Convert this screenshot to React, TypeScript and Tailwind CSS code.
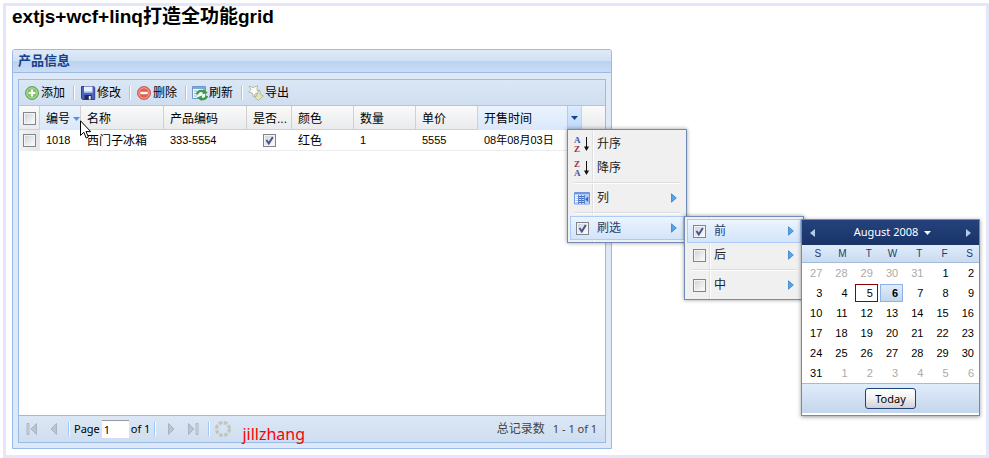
import { useState } from 'react'
import type { ReactNode } from 'react'

const products = [
  { id: '1018', name: '西门子冰箱', code: '333-5554', active: true, color: '红色', count: '1', price: '5555', date: '08年08月03日' },
]

const weekdays = ['S', 'M', 'T', 'W', 'T', 'F', 'S']

const weeks = [
  [27, 28, 29, 30, 31, 1, 2],
  [3, 4, 5, 6, 7, 8, 9],
  [10, 11, 12, 13, 14, 15, 16],
  [17, 18, 19, 20, 21, 22, 23],
  [24, 25, 26, 27, 28, 29, 30],
  [31, 1, 2, 3, 4, 5, 6],
]

/* Icons */

function AddIcon() {
  return (
    <svg width="16" height="16" viewBox="0 0 16 16">
      <circle cx="8" cy="8" r="6.5" fill="#6db85a" stroke="#6aa35c" />
      <circle cx="8" cy="8" r="5.2" fill="#7cc264" stroke="#c5e6b6" strokeWidth="0.8" />
      <path d="M8 4.6v6.8M4.6 8h6.8" stroke="#fff" strokeWidth="2.2" />
    </svg>
  )
}

function SaveIcon() {
  return (
    <svg width="16" height="16" viewBox="0 0 16 16">
      <path d="M1.5 1.5h12.2l1 1v12H2.5l-1-1z" fill="#4a63c0" stroke="#2f3f94" />
      <path d="M4 1.5h8.5v6H4z" fill="#e9effb" />
      <path d="M4 6.5h8.5v1.2H4z" fill="#9db4e6" />
      <path d="M4.5 10h7v4.5h-7z" fill="#20295f" />
      <path d="M8.8 11h1.9v3.5H8.8z" fill="#f0f3fb" />
    </svg>
  )
}

function DeleteIcon() {
  return (
    <svg width="16" height="16" viewBox="0 0 16 16">
      <circle cx="8" cy="8" r="6.5" fill="#dd5f4e" stroke="#cc6153" />
      <circle cx="8" cy="8" r="5.2" fill="#e4604e" stroke="#f6b9ad" strokeWidth="0.8" />
      <path d="M4.3 8h7.4" stroke="#fff" strokeWidth="2.4" />
    </svg>
  )
}

function RefreshIcon() {
  return (
    <svg width="16" height="16" viewBox="0 0 16 16">
      <path d="M.5 1.5h13v12H.5z" fill="#f3f8fe" stroke="#6f98c8" />
      <path d="M1 2h12v2H1z" fill="#7fa9dc" />
      <path d="M2 6h3M2 8.5h3M2 11h3" stroke="#8fb0d8" />
      <path d="M5 9.500C5.500 6 9 5 12 6.800" fill="none" stroke="#3c9a45" strokeWidth="2.4" />
      <path d="M11.500 3.500L15.800 8l-5.300 1.200z" fill="#3c9a45" />
      <path d="M15 11c-1 3-4 3.600-6.500 2.600" fill="none" stroke="#3c9a45" strokeWidth="2.4" />
      <path d="M9.500 16L5 12.600l5-2z" fill="#3c9a45" />
    </svg>
  )
}

function ExportIcon() {
  return (
    <svg width="16" height="16" viewBox="0 0 16 16">
      <path d="M1 1l4 1.500L9.500.8l-.6 4.200 3 3.200-4.200.2L5.600 12 4.400 8.200.6 7 3 4.600z" fill="#fbfcf5" stroke="#b4b7ab" />
      <path d="M11 4.800l1.600 2.800-1 1 3.600 2.400-4.900 4.200-4-3.400 2-.3z" fill="#eef0d2" stroke="#b1b388" />
      <path d="M8.500 11.500l2.200 1.800 2.600-2.200-2.600-1.800z" fill="#dfe2ab" />
    </svg>
  )
}

function SortIcon({ first, second, firstColor, secondColor }: { first: string; second: string; firstColor: string; secondColor: string }) {
  return (
    <svg width="16" height="18" viewBox="0 0 16 18">
      <text x="0" y="8" fontSize="9" fontWeight="bold" fontFamily="Liberation Serif, serif" fill={firstColor}>{first}</text>
      <text x="0" y="17" fontSize="9" fontWeight="bold" fontFamily="Liberation Serif, serif" fill={secondColor}>{second}</text>
      <path d="M12.5 2v11" stroke="#111" />
      <path d="M10 11.500h5L12.500 16z" fill="#111" />
    </svg>
  )
}

function ColumnsIcon() {
  return (
    <svg width="16" height="16" viewBox="0 0 16 16">
      <path d="M.5 2.500h15v11.500H.5z" fill="#fff" stroke="#6d97e0" />
      <path d="M1 3h14v1.500H1z" fill="#6d97e6" />
      <path d="M1.500 6.500h2.500M1.500 8.500h2.500M1.500 10.500h2.500M1.500 12.500h2.500" stroke="#a9c2ee" />
      <path d="M4.500 5h6v9h-6z" fill="#cddcf8" />
      <path d="M4.500 5v9M7.500 5v9M10.500 5v9" stroke="#5b86d6" />
      <path d="M5 6.500h2M5 8.500h2M5 10.500h2M5 12.500h2M8 6.500h2M8 8.500h2M8 10.500h2M8 12.500h2" stroke="#3f68bd" />
      <path d="M11 5h4v9h-4z" fill="#b5cbf3" />
      <path d="M14.200 6.500v5.500l-3-2.700z" fill="#2c62c8" />
    </svg>
  )
}

function PagerIcon({ kind }: { kind: 'first' | 'prev' | 'next' | 'last' }) {
  const flip = kind === 'next' || kind === 'last'
  const bar = kind === 'first' || kind === 'last'
  return (
    <svg width="16" height="16" viewBox="0 0 16 16" className={flip ? '-scale-x-100' : ''}>
      {bar && <path d="M3 2.500h2v11H3z" fill="#d3d9e0" stroke="#a3abb5" strokeWidth="0.8" />}
      <path d={bar ? 'M12.500 2.500v11L7 8z' : 'M10.500 2.500v11L5 8z'} fill="#bcc4cd" stroke="#a3abb5" strokeWidth="0.8" />
    </svg>
  )
}

function LoadingIcon() {
  return (
    <svg width="18" height="18" viewBox="0 0 18 18">
      <circle cx="9" cy="9" r="6.500" fill="none" stroke="#c3c4bd" strokeWidth="3.200" strokeDasharray="3.600 1.500" />
    </svg>
  )
}

function Cursor() {
  return (
    <svg width="12" height="20" viewBox="0 0 12 20" className="absolute left-full top-3.5 z-10 pointer-events-none">
      <path d="M.5.8v14.7l3.300-3.200 2.400 5.700 2.200-1-2.400-5.400h4.700z" fill="#fff" stroke="#000" />
    </svg>
  )
}

/* Small controls */

function Checkbox({ label, checked = false }: { label: string; checked?: boolean }) {
  return (
    <span className="relative block w-[13px] h-[13px] shrink-0">
      <input
        type="checkbox"
        aria-label={label}
        defaultChecked={checked}
        className="peer block w-[13px] h-[13px] appearance-none border border-[#7f868f] bg-gradient-to-br from-[#cfd0d3] to-white shadow-[inset_0_0_0_1px_#f4f4f4]"
      />
      <svg viewBox="0 0 13 13" className="hidden peer-checked:block absolute inset-0 pointer-events-none">
        <path d="M3.500 6l2.300 3.500L9.800 3" fill="none" stroke="#44558f" strokeWidth="2" />
      </svg>
    </span>
  )
}

function Separator() {
  return <span className="w-px h-3.5 bg-[#98c8ff] border-r border-white box-content" />
}

function ToolButton({ icon, label }: { icon: ReactNode; label: string }) {
  return (
    <button type="button" className="flex items-center gap-px pl-[5px] pr-2 hover:text-[#15428b]">
      {icon}
      <span>{label}</span>
    </button>
  )
}

function PagerButton({ kind, label }: { kind: 'first' | 'prev' | 'next' | 'last'; label: string }) {
  return (
    <button type="button" disabled aria-label={label} className="flex justify-center w-[22px]">
      <PagerIcon kind={kind} />
    </button>
  )
}

/* Menus */

function Menu({ className, children }: { className: string; children: ReactNode }) {
  return (
    <ul className={`absolute w-[120px] p-0.5 border border-[#718bb7] bg-[#f0f0f0] bg-[linear-gradient(to_right,transparent_24px,#e0e0e0_24px,#e0e0e0_25px,#fff_25px,#fff_26px,transparent_26px)] shadow-[0_0_4px_rgba(0,0,0,0.4)] text-xs text-[#222] font-normal ${className}`}>
      {children}
    </ul>
  )
}

interface MenuItemProps {
  icon: ReactNode
  label: string
  active?: boolean
  arrow?: boolean
  children?: ReactNode
}

function MenuItem({ icon, label, active, arrow, children }: MenuItemProps) {
  return (
    <li className={`relative flex items-center h-6 px-[3px] border ${active ? 'border-[#aaccf6] bg-gradient-to-b from-[#ecf4fe] to-[#d3e4fa] text-[#233d6d]' : 'border-transparent'}`}>
      <span className="flex justify-center w-4">{icon}</span>
      <button type="button" className="flex flex-1 items-center justify-between pl-[7px] pr-[3px] text-left">
        {label}
        {arrow && (
          <svg width="6" height="10" viewBox="0 0 6 10">
            <path d="M.5.8v8.400L5.300 5z" fill="#55a5ec" stroke="#3a7fc8" strokeWidth="0.800" />
          </svg>
        )}
      </button>
      {children}
    </li>
  )
}

function MenuSeparator() {
  return <li role="separator" className="h-0.5 mx-1 my-0.5 bg-[#dcdcdc] border-b border-white" />
}

function DatePicker() {
  const [selected, setSelected] = useState('1-3')

  return (
    <div className="absolute left-full top-0 ml-px -mt-px w-[179px] border border-[#718bb7] bg-white pb-0.5 shadow-[0_1px_4px_rgba(0,0,0,0.4)] font-['Liberation_Sans',sans-serif] text-[11px] text-black">
      <div className="flex items-center h-[25px] px-2 bg-gradient-to-b from-[#24427c] to-[#1a3468] text-white font-['Noto_Sans',sans-serif]">
        <button type="button" aria-label="Previous month">
          <svg width="5" height="8" viewBox="0 0 5 8"><path d="M5 0v8L0 4z" fill="#b5cbee" /></svg>
        </button>
        <button type="button" className="flex flex-1 items-center justify-center gap-1.5 pl-1">
          August 2008
          <svg width="7" height="4" viewBox="0 0 7 4"><path d="M0 0h7L3.500 4z" fill="#fff" /></svg>
        </button>
        <button type="button" aria-label="Next month">
          <svg width="5" height="8" viewBox="0 0 5 8"><path d="M0 0v8L5 4z" fill="#b5cbee" /></svg>
        </button>
      </div>
      <table className="w-full table-fixed border-separate border-spacing-0">
        <thead>
          <tr className="bg-gradient-to-b from-[#dfecfb] to-[#c8daf0]">
            {weekdays.map((day, i) => (
              <th key={i} className="h-[18px] p-0 pr-1.5 border-b border-[#a3bad9] text-right text-[10px] leading-4 font-normal text-[#233d6d]">{day}</th>
            ))}
          </tr>
        </thead>
        <tbody>
          {weeks.map((week, row) => (
            <tr key={row}>
              {week.map((day, col) => {
                const key = `${row}-${col}`
                const outside = (row === 0 && day > 7) || (row === 5 && day < 7)
                const today = key === '1-2'
                return (
                  <td key={key} className="p-0 pl-0.5">
                    <button
                      type="button"
                      onClick={() => setSelected(key)}
                      className={`block w-full h-[18px] my-px pr-1 border text-right leading-4 ${today ? 'border-[#8b0000]' : selected === key ? 'border-[#8db2e3] bg-gradient-to-b from-[#dfecfb] to-[#c0d5ef] font-bold' : 'border-transparent'} ${outside ? 'text-[#aaa]' : ''}`}
                    >
                      {day}
                    </button>
                  </td>
                )
              })}
            </tr>
          ))}
        </tbody>
      </table>
      <div className="flex justify-center py-1 border-t border-[#a3bad9] bg-gradient-to-b from-[#dfecfb] to-[#c4d6ec]">
        <button type="button" className="h-[21px] px-[9px] rounded-[3px] border border-[#1d4377] bg-gradient-to-b from-white via-[#f1f1f3] to-[#cfcfd6] font-['Noto_Sans',sans-serif] text-[11px] leading-4">
          Today
        </button>
      </div>
    </div>
  )
}

function HeaderMenu() {
  return (
    <Menu className="left-0 top-full -mt-px z-20">
      <MenuItem icon={<SortIcon first="A" second="Z" firstColor="#3c56a8" secondColor="#99333f" />} label="升序" />
      <MenuItem icon={<SortIcon first="Z" second="A" firstColor="#99333f" secondColor="#3c56a8" />} label="降序" />
      <MenuSeparator />
      <MenuItem icon={<ColumnsIcon />} label="列" arrow />
      <MenuSeparator />
      <MenuItem icon={<Checkbox label="刷选" checked />} label="刷选" active arrow>
        <Menu className="left-full top-0 ml-px -mt-px">
          <MenuItem icon={<Checkbox label="前" checked />} label="前" active arrow>
            <DatePicker />
          </MenuItem>
          <MenuItem icon={<Checkbox label="后" />} label="后" arrow />
          <MenuSeparator />
          <MenuItem icon={<Checkbox label="中" />} label="中" arrow />
        </Menu>
      </MenuItem>
    </Menu>
  )
}

/* Grid */

function HeaderCell({ children, className = '' }: { children: ReactNode; className?: string }) {
  return (
    <th className={`relative p-0 pt-px pl-1.5 border-r border-[#d0d0d0] text-left font-normal whitespace-nowrap ${className}`}>
      {children}
    </th>
  )
}

function Grid() {
  return (
    <table className="w-full table-fixed border-separate border-spacing-0">
      <colgroup>
        <col className="w-[21px]" />
        <col className="w-[41px]" />
        <col className="w-[83px]" />
        <col className="w-[83px]" />
        <col className="w-[45px]" />
        <col className="w-[62px]" />
        <col className="w-[62px]" />
        <col className="w-[62px]" />
        <col className="w-[104px]" />
        <col />
      </colgroup>
      <thead>
        <tr className="h-6 bg-gradient-to-b from-[#fafafa] to-[#e9eaec] shadow-[inset_0_-1px_#d0d0d0]">
          <th className="p-0 pl-1 border-r border-[#d0d0d0]"><Checkbox label="全选" /></th>
          <HeaderCell className="bg-gradient-to-b from-[#ebf3fd] to-[#d9e8fb]">
            <span className="flex items-center gap-[3px]">
              编号
              <svg width="7" height="4" viewBox="0 0 7 4" className="shrink-0"><path d="M0 0h7L3.500 4z" fill="#5d92d4" /></svg>
            </span>
            <Cursor />
          </HeaderCell>
          <HeaderCell>名称</HeaderCell>
          <HeaderCell>产品编码</HeaderCell>
          <HeaderCell>是否...</HeaderCell>
          <HeaderCell>颜色</HeaderCell>
          <HeaderCell>数量</HeaderCell>
          <HeaderCell>单价</HeaderCell>
          <HeaderCell className="bg-gradient-to-b from-[#ebf3fd] to-[#d9e8fb]">
            开售时间
            <div className="absolute right-0 inset-y-0 w-3.5">
              <button type="button" aria-label="列菜单" className="flex items-center justify-center w-full h-full border-l border-[#aaccf6] bg-gradient-to-b from-[#dcebfd] to-[#bcd8fa]">
                <svg width="7" height="4" viewBox="0 0 7 4"><path d="M0 0h7L3.500 4z" fill="#15428b" /></svg>
              </button>
              <HeaderMenu />
            </div>
          </HeaderCell>
          <th className="p-0" />
        </tr>
      </thead>
      <tbody>
        {products.map((p) => (
          <tr key={p.id} className="h-[21px] shadow-[inset_0_-1px_#ededed] [&>td]:p-0 [&>td]:pl-1.5 [&>td]:whitespace-nowrap">
            <td className="bg-gradient-to-r from-[#f3f3f3] to-[#e4e6ea]"><span className="block -ml-0.5"><Checkbox label={p.name} /></span></td>
            <td className="text-[11px]">{p.id}</td>
            <td>{p.name}</td>
            <td className="text-[11px]">{p.code}</td>
            <td><span className="flex justify-center pr-1.5"><Checkbox label="是否有效" checked={p.active} /></span></td>
            <td>{p.color}</td>
            <td className="text-[11px]">{p.count}</td>
            <td className="text-[11px]">{p.price}</td>
            <td className="text-[11px]">{p.date}</td>
            <td />
          </tr>
        ))}
      </tbody>
    </table>
  )
}

function Toolbar() {
  return (
    <div className="flex items-center h-[26px] border-b border-[#a9c5ea] bg-gradient-to-b from-[#dbe7f5] to-[#cfdef0]">
      <ToolButton icon={<AddIcon />} label="添加" />
      <Separator />
      <ToolButton icon={<SaveIcon />} label="修改" />
      <Separator />
      <ToolButton icon={<DeleteIcon />} label="删除" />
      <Separator />
      <ToolButton icon={<RefreshIcon />} label="刷新" />
      <Separator />
      <ToolButton icon={<ExportIcon />} label="导出" />
    </div>
  )
}

function Pager() {
  const [page, setPage] = useState('1')

  return (
    <div className="flex items-center h-[27px] pl-0.5 pr-2 border-t border-[#99bbe8] bg-gradient-to-b from-[#dbe7f5] to-[#cfdef0] font-['Noto_Sans','Noto_Sans_CJK_SC',sans-serif] text-[11px]">
      <PagerButton kind="first" label="First page" />
      <PagerButton kind="prev" label="Previous page" />
      <span className="flex items-center ml-[3px] mr-1">
        <Separator />
        <label htmlFor="page" className="ml-1 mr-0.5">Page</label>
        <input
          id="page"
          value={page}
          onChange={(e) => setPage(e.target.value)}
          className="w-[27px] h-[18px] px-0.5 border-t border-[#999] bg-white"
        />
        <span className="ml-0.5 mr-1">of 1</span>
        <Separator />
      </span>
      <PagerButton kind="next" label="Next page" />
      <PagerButton kind="last" label="Last page" />
      <span className="flex items-center gap-1 ml-1">
        <Separator />
        <LoadingIcon />
      </span>
      <span className="ml-2.5 pt-2.5 text-base leading-5 text-[#f00]">jillzhang</span>
      <span className="flex items-center gap-2 ml-auto text-[#444]">
        <span className="text-xs">总记录数</span>
        <span>1 - 1 of 1</span>
      </span>
    </div>
  )
}

export default function App() {
  return (
    <div className="flex flex-col min-h-screen pl-[3px] pt-[3px] bg-white">
      <main className="flex flex-1 flex-col px-1.5 pb-1.5 border-[3px] border-[#e6e6fa] font-['Liberation_Sans','Noto_Sans_CJK_SC',sans-serif] text-xs text-black">
        <h3 className="mb-[21px] text-[19px] leading-[22px] font-bold">extjs+wcf+linq打造全功能grid</h3>
        <section className="flex flex-1 flex-col w-[62%] min-w-[600px] border border-[#99bbe8] rounded-t-[3px] bg-[#dfe8f6]">
          <h2 className="h-[23px] px-[5px] border-b border-[#99bbe8] rounded-t-[3px] bg-[linear-gradient(#e0ebf9,#d0e0f4_50%,#bdd2f0_50%,#cbdcf4)] text-[13px] leading-[22px] font-bold text-[#15428b]">
            产品信息
          </h2>
          <div className="flex flex-1 flex-col m-[5px] mt-1.5 border border-[#99bbe8]">
            <Toolbar />
            <div className="flex-1 bg-white">
              <Grid />
            </div>
            <Pager />
          </div>
        </section>
      </main>
    </div>
  )
}
